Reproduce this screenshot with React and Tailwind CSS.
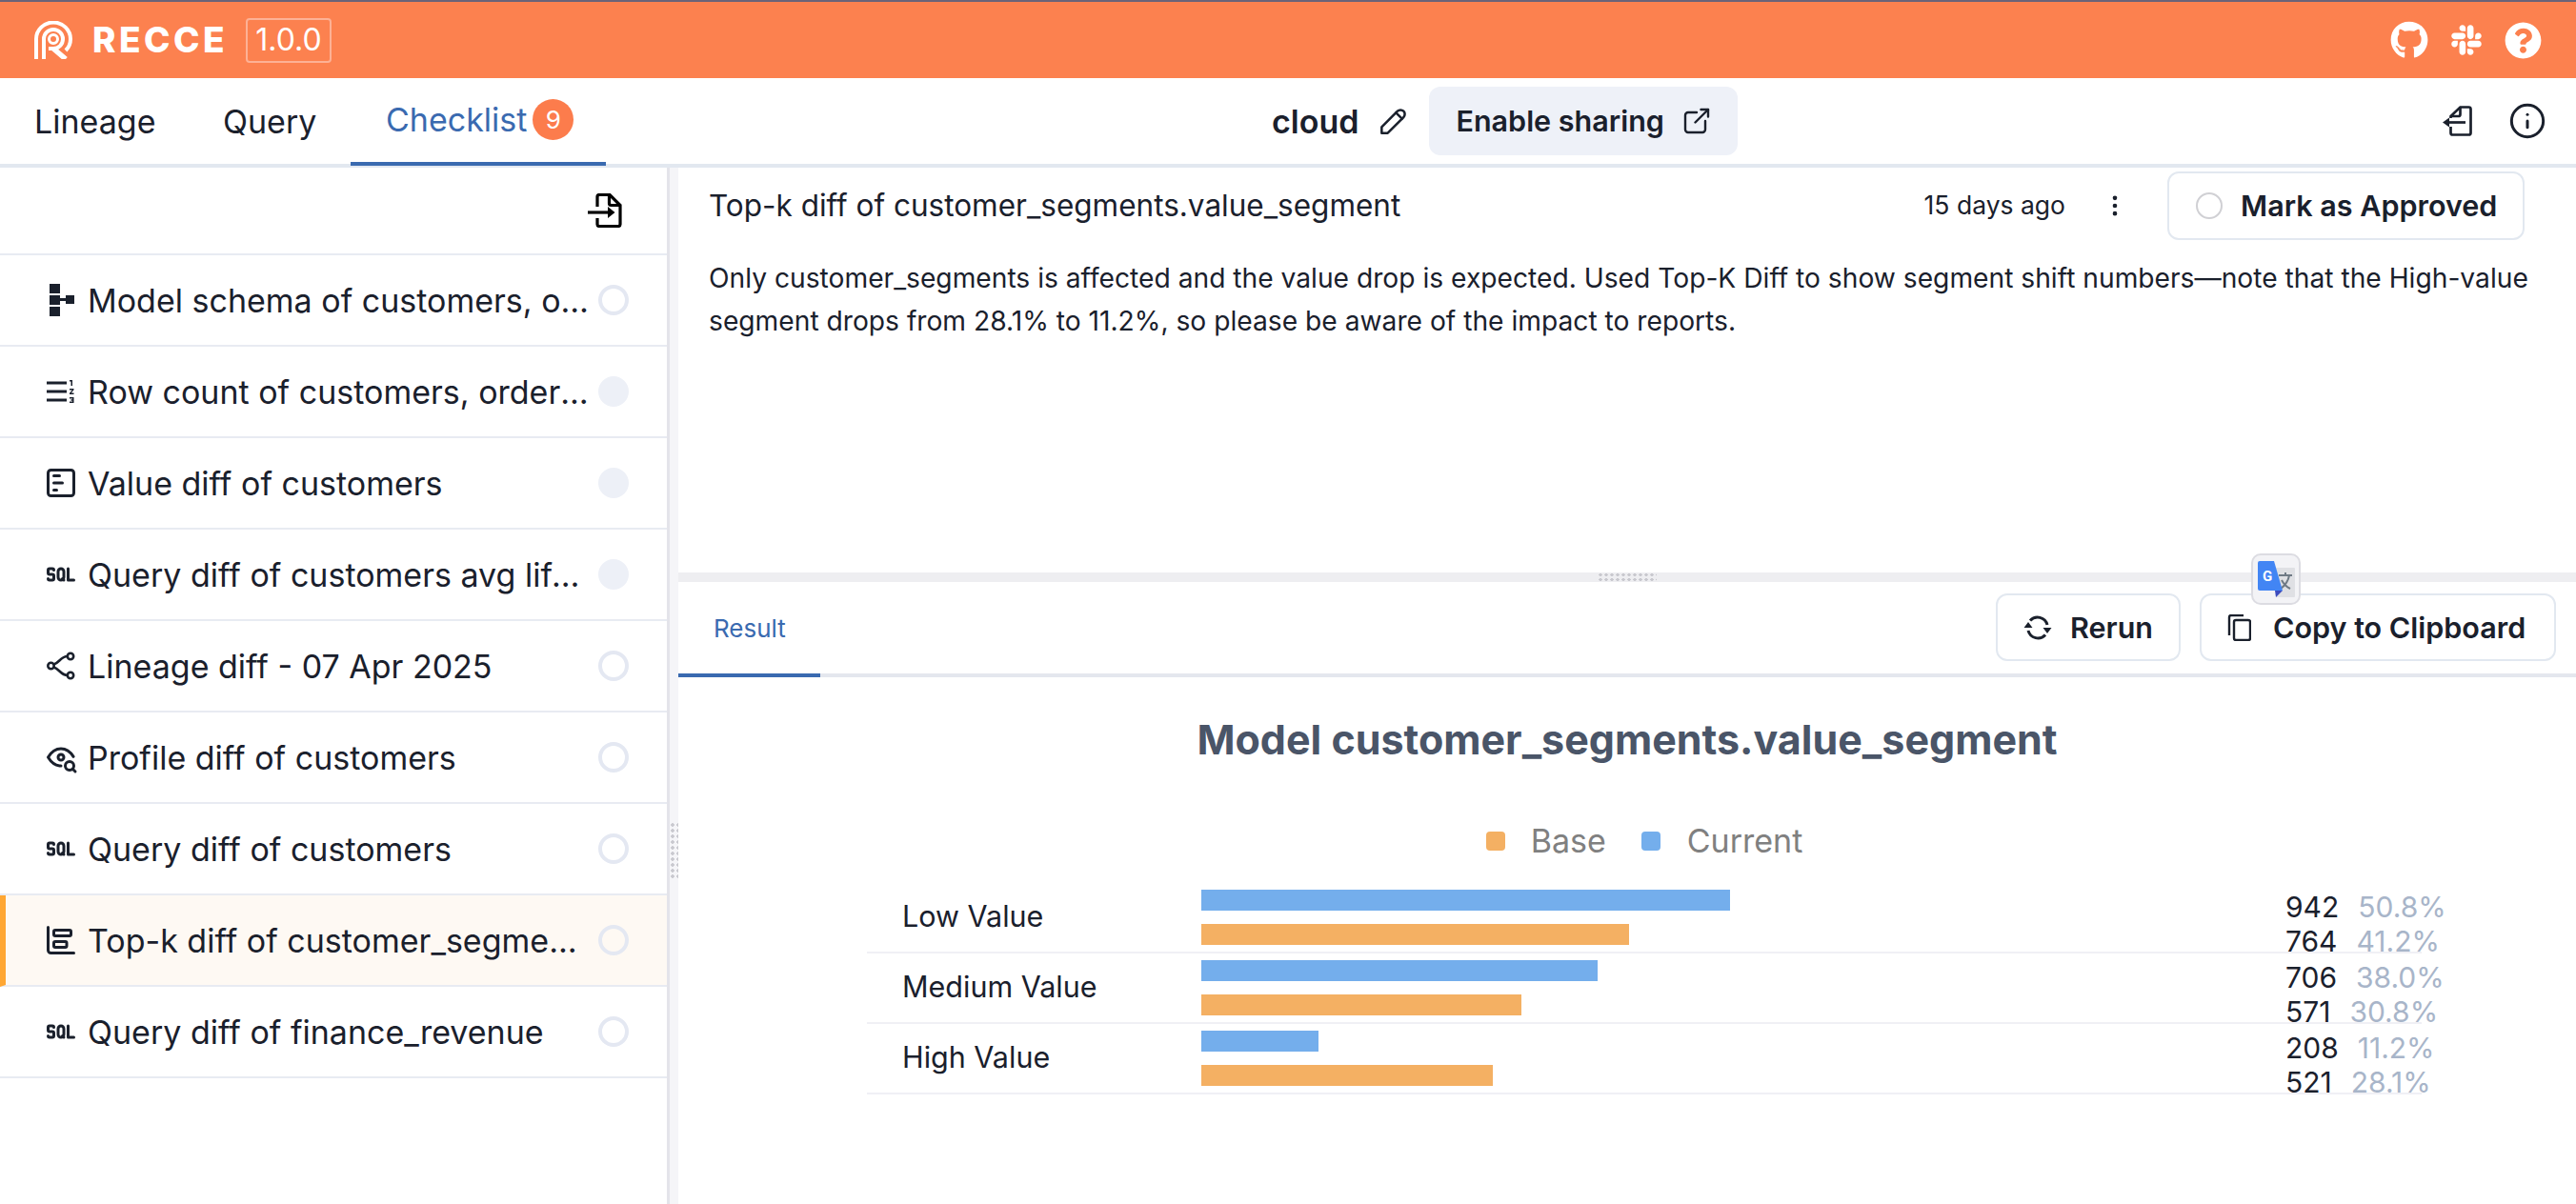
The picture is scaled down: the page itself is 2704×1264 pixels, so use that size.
import { FaGithub, FaSlack, FaQuestionCircle } from "react-icons/fa"
import {
  TbAlignBoxLeftStretch,
  TbEyeSearch,
  TbSql,
  TbExternalLink,
  TbPencil,
} from "react-icons/tb"
import { MdFormatListNumberedRtl } from "react-icons/md"
import { ChartBarBig, Info, EllipsisVertical } from "lucide-react"

const SchemaIcon = ({ className }) => (
  <svg viewBox="-3 -1 36 36" className={className} fill="currentColor">
    <rect x="3" y="0" width="11" height="10" />
    <rect x="3" y="12" width="11" height="10" />
    <rect x="3" y="24" width="11" height="10" />
    <rect x="14" y="15" width="6" height="3" />
    <rect x="20" y="12" width="9" height="9" />
  </svg>
)

const LineageIcon = ({ className }) => (
  <svg viewBox="-3 -3 36 36" className={className} fill="none" stroke="currentColor" strokeWidth="2.6">
    <circle cx="4.5" cy="15" r="3.2" />
    <circle cx="25" cy="5" r="3.2" />
    <circle cx="25" cy="25" r="3.2" />
    <path d="M7.5 13.5 C 13 12, 15 5, 21.8 5 M7.5 16.5 C 13 18, 15 25, 21.8 25" />
  </svg>
)

const ImportIcon = ({ className }) => (
  <svg viewBox="0 0 36 36" className={className} fill="none" stroke="currentColor" strokeWidth="3.2">
    <path d="M10 14 V3.5 a2 2 0 0 1 2 -2 h11 l11 11 v20 a2 2 0 0 1 -2 2 H12 a2 2 0 0 1 -2 -2 V26" />
    <path d="M22.5 1.5 v9 a2 2 0 0 0 2 2 h9.5" />
    <path d="M0 20 H24" />
    <path d="M21 14 L28.5 20 L21 26 Z" fill="currentColor" stroke="none" />
  </svg>
)

const ExportIcon = ({ className }) => (
  <svg viewBox="0 0 32 32" className={className} fill="none" stroke="currentColor" strokeWidth="2.7">
    <path d="M8.5 13 V11 l10 -9.5 h9 a2 2 0 0 1 2 2 v25 a2 2 0 0 1 -2 2 H10.5 a2 2 0 0 1 -2 -2 V22" />
    <path d="M8.5 11 h8 a2 2 0 0 0 2 -2 V1.5" />
    <path d="M3 17.5 H24" />
    <path d="M0 17.5 L7 12.5 V22.5 Z" fill="currentColor" stroke="none" />
  </svg>
)

const Logo = () => (
  <svg viewBox="0 0 40 40" className="w-[40px] h-[40px] shrink-0" fill="none" stroke="white" strokeWidth="4">
    <path d="M2 40 V19 a18 17.5 0 0 1 36 0 c0 5 -2 9 -5 12" />
    <path d="M10 40 V19 a10 10 0 1 1 10 10 h-5" />
    <circle cx="20" cy="19" r="4.5" strokeWidth="3" />
    <path d="M20 29 L33 40" strokeWidth="5.5" />
  </svg>
)

const RerunIcon = ({ className }) => (
  <svg viewBox="0 0 30 26" className={className} fill="currentColor">
    <path d="M25 10 A10.5 10.5 0 0 0 7 5.6" fill="none" stroke="currentColor" strokeWidth="3" />
    <path d="M5 16 A10.5 10.5 0 0 0 23 20.4" fill="none" stroke="currentColor" strokeWidth="3" />
    <path d="M0.5 13 L9.5 13 L5 7 Z M20.5 13 L29.5 13 L25 19 Z" />
  </svg>
)

const CopyIcon = ({ className }) => (
  <svg viewBox="0 0 25 28" className={className} fill="none" stroke="currentColor" strokeWidth="2.4">
    <rect x="7" y="6" width="17" height="21" rx="2" />
    <path d="M2 22 V3 a2 2 0 0 1 2 -2 h13" />
  </svg>
)

const TranslateBadge = () => (
  <div className="absolute left-[1651px] top-[-20px] w-[52px] h-[54px] rounded-[10px] border-2 border-[#dcdce2] bg-[#f3f3f6]">
    <svg viewBox="0 0 48 50" className="w-[48px] h-[50px]">
      <rect x="24" y="13" width="20" height="31" rx="1" fill="#dfe0e4" />
      <path d="M27 21 h14 M34 18 v3 M38 21 c-1 6 -5 11 -9 14 M30 26 c2 4 5 7 9 9" fill="none" stroke="#6f7a85" strokeWidth="2" />
      <path d="M7 6 H22 L31 37 H7 a2 2 0 0 1 -2 -2 V8 a2 2 0 0 1 2 -2 Z" fill="#4285f4" />
      <path d="M23 37 H31 L24 44 Z" fill="#3c4bbd" />
      <text x="15" y="27" fontSize="15" fontWeight="700" fill="white" textAnchor="middle" fontFamily="Roboto, sans-serif">G</text>
    </svg>
  </div>
)

const items = [
  { title: "Model schema of customers, orders, products", icon: SchemaIcon },
  { title: "Row count of customers, orders, products", icon: MdFormatListNumberedRtl, done: true },
  { title: "Value diff of customers", icon: TbAlignBoxLeftStretch, done: true },
  { title: "Query diff of customers avg lifetime value", icon: TbSql, done: true },
  { title: "Lineage diff - 07 Apr 2025", icon: LineageIcon },
  { title: "Profile diff of customers", icon: TbEyeSearch },
  { title: "Query diff of customers", icon: TbSql },
  { title: "Top-k diff of customer_segments.value_segment", icon: ChartBarBig, active: true },
  { title: "Query diff of finance_revenue", icon: TbSql },
]

const rows = [
  { label: "Low Value", cur: 555, base: 449, curN: "942", curP: "50.8%", baseN: "764", baseP: "41.2%" },
  { label: "Medium Value", cur: 416, base: 336, curN: "706", curP: "38.0%", baseN: "571", baseP: "30.8%" },
  { label: "High Value", cur: 123, base: 306, curN: "208", curP: "11.2%", baseN: "521", baseP: "28.1%" },
]

const CheckItem = ({ title, icon: Icon, done, active }) => (
  <div
    className={`flex items-center h-[96px] border-b-2 border-[#e8ebf2] pr-[40px] ${
      active ? "bg-[#fef9f3] border-l-[6px] border-l-[#ffa733] pl-[40px]" : "pl-[46px]"
    }`}
  >
    <Icon className="w-[36px] h-[36px] shrink-0" />
    <div className="ml-[10px] pt-[1px] flex-1 min-w-0 truncate text-[34px]">{title}</div>
    <div
      className={`ml-[7px] w-[32px] h-[32px] shrink-0 rounded-full border-[4px] ${
        done ? "bg-[#edf0f7] border-[#edf0f7]" : "border-[#e4e8f2]"
      }`}
    />
  </div>
)

const ChartRow = ({ row }) => (
  <div className="flex h-[74px] border-b-2 border-[#f0f0f5] pl-[37px]">
    <div className="w-[314px] shrink-0 pt-[13px] text-[30.5px] leading-[44px]">{row.label}</div>
    <div className="w-[1138px] shrink-0 pt-[7px] flex flex-col gap-[14px]">
      <div className="h-[22px] bg-[#74aeec]" style={{ width: row.cur }} />
      <div className="h-[22px] bg-[#f4b063]" style={{ width: row.base }} />
    </div>
    <div className="shrink-0 text-[30px] leading-[36px] pt-[7px]">
      <div className="flex gap-[20px] whitespace-nowrap">
        <span>{row.curN}</span>
        <span className="text-[#a8b5c9]">{row.curP}</span>
      </div>
      <div className="flex gap-[20px] whitespace-nowrap">
        <span>{row.baseN}</span>
        <span className="text-[#a8b5c9]">{row.baseP}</span>
      </div>
    </div>
  </div>
)

export default function App() {
  return (
    <div className="w-[2704px] h-[1264px] overflow-hidden bg-white text-[#1a202c] font-['Inter',sans-serif]">
      <div className="h-[2px] bg-[#6b6378]" />
      <div className="h-[80px] bg-[#fc814f] flex items-center pl-[36px] pr-[36px] text-white">
        <Logo />
        <span className="ml-[21px] w-[140px] shrink-0 text-[37px] font-extrabold tracking-[3.5px] whitespace-nowrap">RECCE</span>
        <span className="ml-[21px] h-[47px] w-[90px] flex items-center justify-center rounded-[4px] border-2 border-[#fdb195] text-[32px]">1.0.0</span>
        <div className="ml-auto flex items-center gap-[22px]">
          <FaGithub className="w-[40px] h-[40px]" />
          <FaSlack className="w-[36px] h-[36px]" />
          <FaQuestionCircle className="w-[39px] h-[39px]" />
        </div>
      </div>

      <div className="h-[94px] flex items-center border-b-4 border-[#e2e8f0] pr-[31px]">
        <div className="w-[636px] shrink-0 flex h-[94px] text-[34px]">
          <div className="w-[198px] pl-[36px] pt-[1px] flex items-center">Lineage</div>
          <div className="w-[170px] pl-[36px] pt-[1px] flex items-center">Query</div>
          <div className="w-[268px] pl-[37px] pt-[1px] flex items-center gap-[6px] border-b-4 border-[#3a6ab0] text-[#3a6ab0]">
            Checklist
            <span className="w-[43px] h-[43px] rounded-full bg-[#fc7c4c] text-white text-[26px] flex items-center justify-center">9</span>
          </div>
        </div>
        <div className="ml-[699px] flex items-center">
          <span className="text-[34px] font-semibold">cloud</span>
          <TbPencil className="ml-[18px] w-[38px] h-[38px]" strokeWidth={1.6} />
          <button className="ml-[18px] h-[72px] w-[324px] pl-[28px] rounded-[12px] bg-[#eef1f8] flex items-center text-[30.5px] font-semibold">
            Enable sharing
            <TbExternalLink className="ml-[16px] w-[36px] h-[36px]" strokeWidth={1.6} />
          </button>
        </div>
        <div className="ml-auto flex items-center gap-[37px]">
          <ExportIcon className="w-[32px] h-[32px]" />
          <Info className="w-[40px] h-[40px]" strokeWidth={1.8} />
        </div>
      </div>

      <div className="flex h-[1088px]">
        <div className="w-[700px] shrink-0">
          <div className="h-[92px] flex justify-end items-center pr-[47px] border-b-2 border-[#e8ebf2]">
            <ImportIcon className="w-[36px] h-[36px] text-black" />
          </div>
          {items.map((item) => (
            <CheckItem key={item.title} {...item} />
          ))}
        </div>

        <div className="w-[12px] shrink-0 bg-[#f5f5f8] border-l-[3px] border-[#e4e4ea] relative">
          <div className="absolute top-[687px] left-0 w-[9px] h-[60px] bg-[radial-gradient(#c9c9cf_1.5px,transparent_2px)] bg-[length:6px_6px]" />
        </div>

        <div className="flex-1 min-w-0 flex flex-col">
          <div className="h-[425px] pl-[32px] pr-[30px] pt-[4px]">
            <div className="flex items-center h-[72px] mr-[24px]">
              <div className="text-[31.5px]">Top-k diff of customer_segments.value_segment</div>
              <div className="ml-auto text-[26.5px]">15 days ago</div>
              <EllipsisVertical className="ml-[38px] w-[28px] h-[28px]" />
              <button className="ml-[41px] w-[375px] h-[72px] pl-[28px] flex items-center rounded-[12px] border-2 border-[#e2e8f0] text-[30.5px] font-semibold">
                <span className="w-[28px] h-[28px] rounded-full border-2 border-[#d0d0d4]" />
                <span className="ml-[19px]">Mark as Approved</span>
              </button>
            </div>
            <p className="mt-[18px] text-[28.2px] leading-[45px]">
              Only customer_segments is affected and the value drop is expected. Used Top-K Diff to show segment shift numbers—note that the <span className="whitespace-nowrap">High-value</span> segment drops from 28.1% to 11.2%, so please be aware of the impact to reports.
            </p>
          </div>

          <div className="h-[10px] bg-[#eeeef1] relative">
            <div className="absolute left-[965px] top-0 w-[62px] h-[10px] bg-[radial-gradient(#c9c9cf_1.5px,transparent_2px)] bg-[length:6px_5px]" />
            <TranslateBadge />
          </div>

          <div className="h-[100px] flex border-b-4 border-[#e4e7ee]">
            <div className="w-[149px] h-[100px] pl-[37px] flex items-center border-b-4 border-[#3a6ab0] text-[#3a6ab0] text-[26px]">Result</div>
            <div className="ml-auto pr-[21px] pt-[12px] flex gap-[20px]">
              <button className="h-[71px] w-[194px] pl-[27px] flex items-center rounded-[12px] border-2 border-[#e2e8f0] text-[30.5px] font-semibold">
                <RerunIcon className="w-[30px] h-[26px]" />
                <span className="ml-[19px]">Rerun</span>
              </button>
              <button className="h-[71px] w-[374px] pl-[27px] flex items-center rounded-[12px] border-2 border-[#e2e8f0] text-[30.5px] font-semibold">
                <CopyIcon className="w-[25px] h-[28px]" />
                <span className="ml-[23px]">Copy to Clipboard</span>
              </button>
            </div>
          </div>

          <div className="pt-[38px]">
            <div className="text-center text-[43px] font-bold leading-[54px] text-[#4a5568]">Model customer_segments.value_segment</div>
            <div className="mt-[56px] pl-[36px] flex justify-center items-center text-[34px] leading-[48px] text-[#808080]">
              <span className="w-[20px] h-[20px] rounded-[4px] bg-[#f4b063]" />
              <span className="ml-[27px]">Base</span>
              <span className="ml-[37px] w-[20px] h-[20px] rounded-[4px] bg-[#74aeec]" />
              <span className="ml-[28px]">Current</span>
            </div>
            <div className="ml-[198px] w-[1632px] mt-[20px]">
              {rows.map((row) => (
                <ChartRow key={row.label} row={row} />
              ))}
            </div>
          </div>
        </div>
      </div>
    </div>
  )
}
